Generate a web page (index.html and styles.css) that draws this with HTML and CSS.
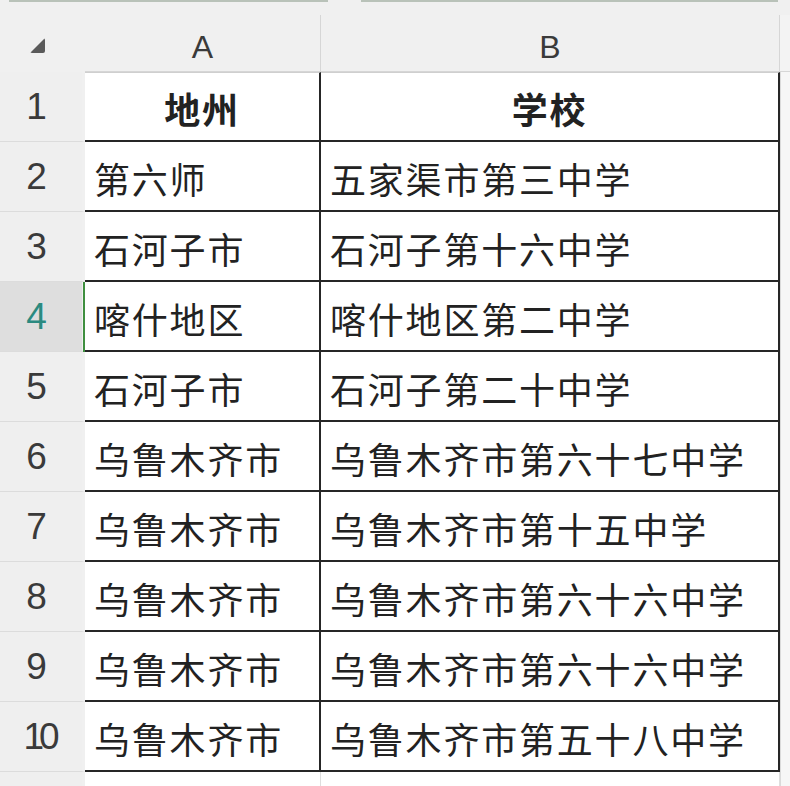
FILE: index.html
```html
<!DOCTYPE html>
<html lang="zh-CN">
<head>
<meta charset="utf-8">
<title>Sheet</title>
<link rel="stylesheet" href="styles.css">
</head>
<body>
<div class="topstrip"><span class="seg seg-a"></span><span class="seg seg-b"></span></div>
<div class="sheet">
  <div class="corner"><span class="tri"></span></div>
  <div class="colhead">A</div>
  <div class="colhead">B</div>
  <div class="colhead edge"></div>

  <div class="rowhead">1</div>
  <div class="cell title">地州</div>
  <div class="cell title colb">学校</div>
  <div class="rest"></div>

  <div class="rowhead">2</div>
  <div class="cell">第六师</div>
  <div class="cell colb">五家渠市第三中学</div>
  <div class="rest"></div>

  <div class="rowhead">3</div>
  <div class="cell">石河子市</div>
  <div class="cell colb">石河子第十六中学</div>
  <div class="rest"></div>

  <div class="rowhead active">4</div>
  <div class="cell selected">喀什地区</div>
  <div class="cell colb">喀什地区第二中学</div>
  <div class="rest"></div>

  <div class="rowhead">5</div>
  <div class="cell">石河子市</div>
  <div class="cell colb">石河子第二十中学</div>
  <div class="rest"></div>

  <div class="rowhead">6</div>
  <div class="cell">乌鲁木齐市</div>
  <div class="cell colb">乌鲁木齐市第六十七中学</div>
  <div class="rest"></div>

  <div class="rowhead">7</div>
  <div class="cell">乌鲁木齐市</div>
  <div class="cell colb">乌鲁木齐市第十五中学</div>
  <div class="rest"></div>

  <div class="rowhead">8</div>
  <div class="cell">乌鲁木齐市</div>
  <div class="cell colb">乌鲁木齐市第六十六中学</div>
  <div class="rest"></div>

  <div class="rowhead">9</div>
  <div class="cell">乌鲁木齐市</div>
  <div class="cell colb">乌鲁木齐市第六十六中学</div>
  <div class="rest"></div>

  <div class="rowhead two">10</div>
  <div class="cell">乌鲁木齐市</div>
  <div class="cell colb">乌鲁木齐市第五十八中学</div>
  <div class="rest"></div>

  <div class="rowhead"></div>
  <div class="blank"></div>
  <div class="blank"></div>
  <div class="rest"></div>
</div>
</body>
</html>
```
FILE: styles.css
```css
html, body {
  margin: 0;
  padding: 0;
  background: #f0f0f0;
  overflow: hidden;
}
body {
  width: 790px;
  height: 786px;
}
.topstrip {
  height: 15px;
  display: flex;
  gap: 33px;
  padding-left: 9px;
}
.seg {
  display: block;
  height: 2px;
  background: #b9c2b9;
}
.seg-a { width: 319px; }
.seg-b { width: 417px; }
.sheet {
  display: grid;
  grid-template-columns: 85px 236px 459px 10px;
  grid-template-rows: 57px repeat(10, 70px) 40px;
  font-family: "Noto Sans CJK SC", sans-serif;
}
.corner {
  background: #f0f0f0;
  position: relative;
}
.tri {
  position: absolute;
  left: 30px;
  top: 23px;
  width: 0;
  height: 0;
  border-left: 15px solid transparent;
  border-bottom: 15px solid #5a5a5a;
  border-radius: 2px;
}
.colhead {
  background: #f0f0f0;
  border-right: 1px solid #d6d6d6;
  border-bottom: 1px solid #d6d6d6;
  display: flex;
  align-items: center;
  justify-content: center;
  padding-top: 9px;
  box-sizing: border-box;
  font-family: "Liberation Sans", Arial, sans-serif;
  font-size: 32px;
  color: #3a3a3a;
}
.colhead.edge {
  border-right: 0;
  background: #f3f3f3;
}
.rowhead {
  background: #efefef;
  border-bottom: 1px solid #dcdcdc;
  border-right: 3px solid #f0f0f0;
  box-sizing: border-box;
  display: flex;
  align-items: center;
  justify-content: center;
  padding-right: 9px;
  font-family: "Liberation Sans", Arial, sans-serif;
  font-size: 37px;
  color: #3a3a3a;
}
.rowhead.two {
  letter-spacing: -5px;
  padding-left: 0;
  padding-right: 4px;
}
.rowhead.active {
  background: #dedede;
  color: #2b8a80;
}
.cell {
  background: #fff;
  border-right: 2px solid #262626;
  border-bottom: 2px solid #262626;
  box-sizing: border-box;
  display: flex;
  align-items: center;
  padding: 3px 0 0 9px;
  font-size: 36px;
  letter-spacing: 1.8px;
  color: #222;
  white-space: nowrap;
  position: relative;
}
.cell.title {
  justify-content: center;
  padding-left: 0;
  font-weight: 700;
  border-top: 1px solid #cfcfcf;
}
.cell.selected::before {
  content: "";
  position: absolute;
  left: -2px;
  top: 0;
  bottom: -2px;
  width: 2px;
  background: #3f8f3f;
}
.rest {
  background: #f6f6f6;
  border-left: 1px solid #dadada;
}
.blank {
  background: #fff;
  border-right: 1px solid #dedede;
}
```
